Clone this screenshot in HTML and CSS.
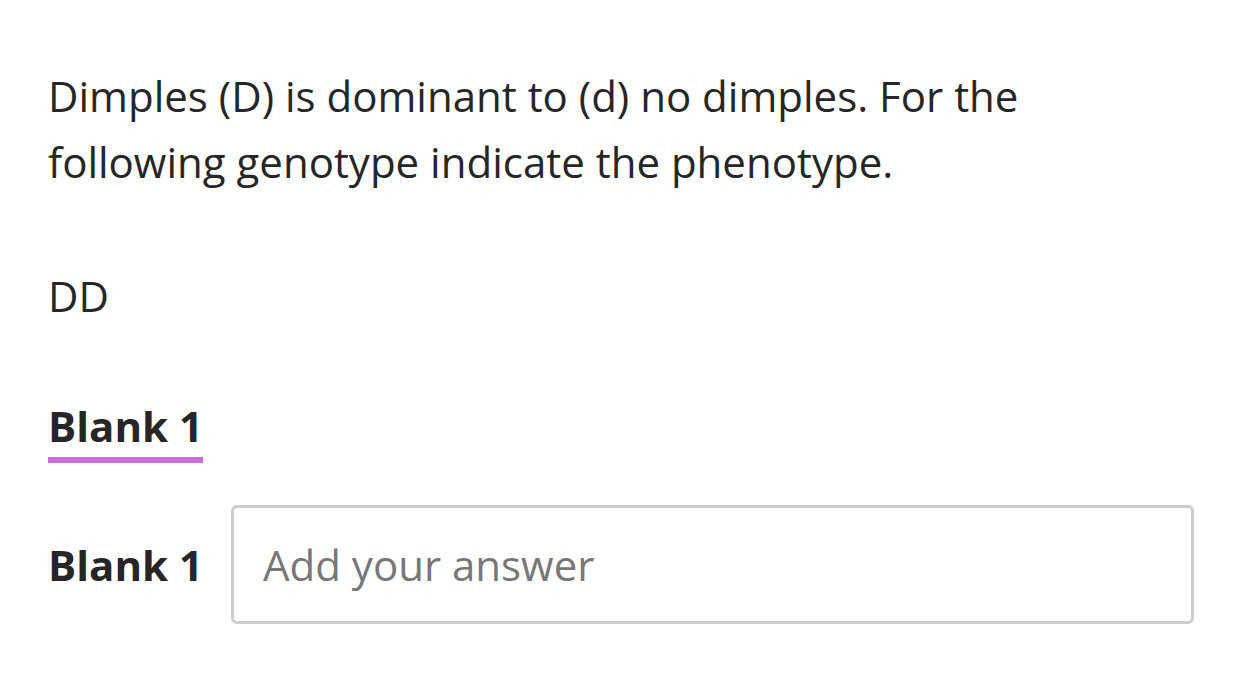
FILE: index.html
```html
<!DOCTYPE html>
<html lang="en">
<head>
<meta charset="utf-8">
<title>Question</title>
<link rel="stylesheet" href="styles.css">
</head>
<body>
<main class="page">
  <p class="prompt">Dimples (D) is dominant to (d) no dimples. For the following genotype indicate the phenotype.</p>
  <p class="prompt genotype">DD</p>
  <div class="tabs">
    <h2 class="tab">Blank 1</h2>
  </div>
  <div class="answer-row">
    <label class="answer-label" for="blank1">Blank 1</label>
    <input class="answer-input" id="blank1" type="text" placeholder="Add your answer">
  </div>
</main>
</body>
</html>
```

FILE: styles.css
```css
html, body {
  margin: 0;
  padding: 0;
  background: #ffffff;
}

body {
  font-family: "Open Sans", "Liberation Sans", sans-serif;
  color: #262626;
}

.page {
  padding: 63px 48px 0 48px;
}

.prompt {
  margin: 0;
  font-size: 42px;
  line-height: 66px;
  max-width: 1050px;
}

.genotype {
  margin-top: 68px;
}

.tabs {
  margin-top: 73px;
}

.tab {
  display: inline-block;
  margin: 0;
  font-size: 42px;
  font-weight: 700;
  line-height: 48px;
  padding-bottom: 7px;
  border-bottom: 6px solid #c86dd7;
}

.answer-row {
  display: flex;
  align-items: center;
  gap: 28px;
  margin-top: 42px;
}

.answer-label {
  font-size: 42px;
  font-weight: 700;
  line-height: 48px;
  color: #262626;
}

.answer-input {
  flex: 1;
  box-sizing: border-box;
  height: 119px;
  margin: 0;
  padding: 0 29px;
  border: 3px solid #cdcdcd;
  border-radius: 6px;
  font-family: "Open Sans", "Liberation Sans", sans-serif;
  font-size: 42px;
  color: #262626;
  background: #ffffff;
  outline: none;
}

.answer-input::placeholder {
  color: #777777;
  opacity: 1;
}
```
